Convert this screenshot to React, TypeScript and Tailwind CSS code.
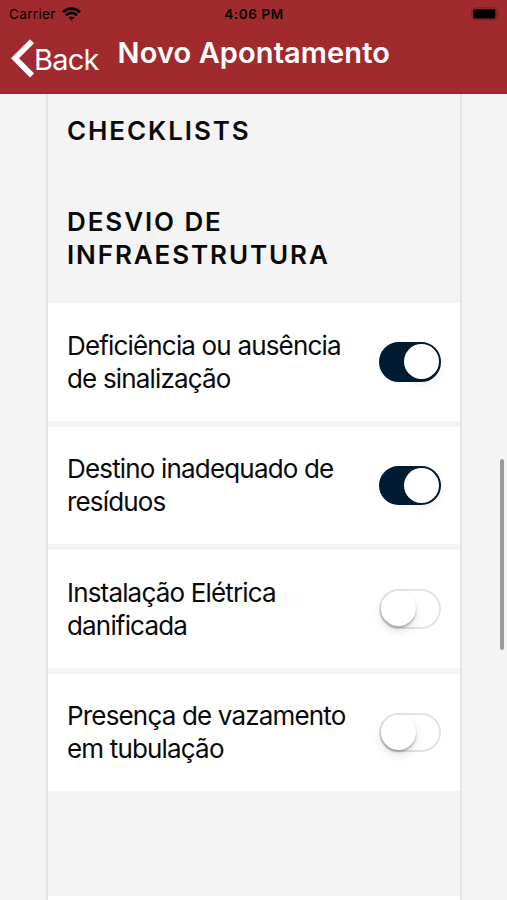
import { useState } from 'react';

const ITEMS = [
  { lines: ['Deficiência ou ausência', 'de sinalização'], checked: true },
  { lines: ['Destino inadequado de', 'resíduos'], checked: true },
  { lines: ['Instalação Elétrica', 'danificada'], checked: false },
  { lines: ['Presença de vazamento', 'em tubulação'], checked: false },
];

export default function App() {
  const [values, setValues] = useState(ITEMS.map((item) => item.checked));

  const toggle = (index: number) => {
    setValues((prev) => prev.map((v, i) => (i === index ? !v : v)));
  };

  return (
    <div className="relative flex h-[900px] w-[507px] flex-col overflow-hidden bg-[#f4f4f4] font-['Inter',sans-serif] text-[#0a0a0a]">
      <Header />

      {/* Conteúdo */}
      <main className="ml-[46px] flex w-[416px] flex-1 flex-col border-x-2 border-[#e4e4e4]">
        <h2 className="mt-5 pl-[19px] text-[26px] leading-[33px] font-semibold tracking-[1.9px]">
          CHECKLISTS
        </h2>
        <h3 className="mt-[58px] pl-[19px] text-[26px] leading-[33px] font-semibold tracking-[1.9px]">
          DESVIO DE
          <br />
          INFRAESTRUTURA
        </h3>

        <ul className="mt-8 flex flex-col gap-[6px]">
          {ITEMS.map((item, index) => (
            <li
              key={item.lines[0]}
              className="flex h-[117.5px] items-center justify-between bg-white pr-[19px] pl-[19px]"
            >
              <span className="text-[26px] leading-[33px] tracking-[-0.83px] whitespace-nowrap">
                {item.lines[0]}
                <br />
                {item.lines[1]}
              </span>
              <Toggle
                checked={values[index]}
                label={item.lines.join(' ')}
                onChange={() => toggle(index)}
              />
            </li>
          ))}
        </ul>

        <div className="mt-auto h-1 bg-white" />
      </main>

      {/* Barra de rolagem */}
      <div className="absolute top-[459px] right-[3.5px] h-[191px] w-1 rounded-full bg-[#9b9b9b]" />
    </div>
  );
}

function Header() {
  return (
    <header className="h-[94px] shrink-0 border-b border-[#94292c] bg-[#a02a2d]">
      {/* Status */}
      <div className="grid h-7 grid-cols-3 items-center pr-[7px] pl-[9px] text-[13.5px] text-black">
        <div className="flex items-center gap-[6px]">
          <span className="tracking-[0.35px]">Carrier</span>
          <WifiIcon />
        </div>
        <span className="pr-px text-center font-semibold tracking-[0.6px]">
          4:06 PM
        </span>
        <BatteryIcon />
      </div>

      {/* Navegação */}
      <div className="flex h-[65px] items-start pl-[11px] text-white">
        <button className="flex items-center pt-[11px]">
          <svg width="23" height="39" viewBox="0 0 23 39" fill="none">
            <path d="M21 2.2 L4 19.3 L21 36.4" stroke="currentColor" strokeWidth="5.7" />
          </svg>
          <span className="pt-[3px] text-[29px] leading-8 tracking-[-0.8px]">
            Back
          </span>
        </button>
        <h1 className="ml-[19px] pt-[9px] text-[29px] leading-8 font-semibold tracking-[0.1px]">
          Novo Apontamento
        </h1>
      </div>
    </header>
  );
}

function WifiIcon() {
  return (
    <svg width="19" height="14" viewBox="0 0 19 14" fill="none" stroke="black">
      <path d="M1 5.2 C5.8 0.4 13.2 0.4 18 5.2" strokeWidth="2.9" />
      <path d="M4 8.2 C7.2 5.1 11.8 5.1 15 8.2" strokeWidth="2.6" />
      <path d="M6.6 10.6 C8.3 9.1 10.7 9.1 12.4 10.6 L9.5 13.6 Z" fill="black" stroke="none" />
    </svg>
  );
}

function BatteryIcon() {
  return (
    <svg className="ml-auto" width="30" height="14" viewBox="0 0 30 14">
      <rect x="1.7" y="0.7" width="25.2" height="12.2" rx="3.4" fill="none" stroke="#7c2023" />
      <rect x="3.2" y="2.2" width="22.2" height="9.4" rx="1.6" fill="black" />
      <path d="M28.3 4.8 C29.7 5.3 29.7 8.3 28.3 8.8 Z" fill="#7c2023" />
    </svg>
  );
}

function Toggle({
  checked,
  label,
  onChange,
}: {
  checked: boolean;
  label: string;
  onChange: () => void;
}) {
  return (
    <button
      role="switch"
      aria-checked={checked}
      aria-label={label}
      onClick={onChange}
      className={`flex h-[39.5px] w-[62.5px] shrink-0 items-center rounded-full border-2 transition ${
        checked
          ? 'justify-end border-[#001c34] bg-[#001c34]'
          : 'justify-start border-[#e3e3e3] bg-white'
      }`}
    >
      <span
        className={`h-[35px] w-[35px] rounded-full bg-white ${
          checked
            ? 'shadow-[0_4px_10px_rgba(0,0,0,0.1)]'
            : 'shadow-[0_2px_2px_rgba(0,0,0,0.25),0_5px_10px_rgba(0,0,0,0.12)]'
        }`}
      />
    </button>
  );
}
